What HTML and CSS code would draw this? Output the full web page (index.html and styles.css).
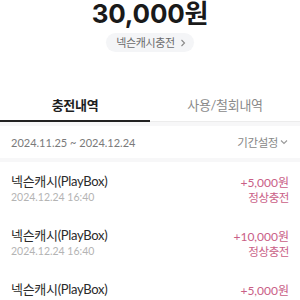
FILE: index.html
```html
<!DOCTYPE html>
<html lang="ko">
<head>
<meta charset="utf-8">
<link rel="stylesheet" href="styles.css">
</head>
<body>
<div class="page">
  <div class="balance">30,000원</div>
  <div class="charge-wrap">
    <span class="charge-btn">넥슨캐시충전
      <svg class="chev-r" width="6" height="8" viewBox="0 0 6 8"><path d="M1.5 1 L4.5 4 L1.5 7" fill="none" stroke="#888" stroke-width="1.1"/></svg>
    </span>
  </div>
  <div class="tabs">
    <div class="tab active">충전내역</div>
    <div class="tab">사용/철회내역</div>
  </div>
  <div class="gap"></div>
  <div class="period">
    <span class="range">2024.11.25 ~ 2024.12.24</span>
    <span class="setting">기간설정
      <svg class="chev-d" width="8" height="6" viewBox="0 0 8 6"><path d="M1 1.5 L4 4.5 L7 1.5" fill="none" stroke="#999" stroke-width="1.1"/></svg>
    </span>
  </div>
  <div class="gap"></div>
  <div class="list">
    <div class="item">
      <div class="left">
        <div class="title">넥슨캐시(PlayBox)</div>
        <div class="date">2024.12.24 16:40</div>
      </div>
      <div class="right">
        <div class="amount">+5,000원</div>
        <div class="status">정상충전</div>
      </div>
    </div>
    <div class="item">
      <div class="left">
        <div class="title">넥슨캐시(PlayBox)</div>
        <div class="date">2024.12.24 16:40</div>
      </div>
      <div class="right">
        <div class="amount">+10,000원</div>
        <div class="status">정상충전</div>
      </div>
    </div>
    <div class="item">
      <div class="left">
        <div class="title">넥슨캐시(PlayBox)</div>
        <div class="date">2024.12.24 16:40</div>
      </div>
      <div class="right">
        <div class="amount">+5,000원</div>
        <div class="status">정상충전</div>
      </div>
    </div>
  </div>
</div>
</body>
</html>
```
FILE: styles.css
```css
html, body {
  margin: 0;
  padding: 0;
  background: #fff;
}
body {
  font-family: Lato, "Noto Sans CJK KR", sans-serif;
  color: #222;
  height: 300px;
  overflow: hidden;
}
.page {
  width: 300px;
}
.balance {
  text-align: center;
  font-family: Inter, "Noto Sans CJK KR", sans-serif;
  font-weight: 700;
  font-size: 26px;
  line-height: 28px;
  color: #1a1a1a;
  letter-spacing: -0.2px;
}
.charge-wrap {
  display: flex;
  justify-content: center;
  margin-top: 5px;
}
.charge-btn {
  display: inline-flex;
  align-items: center;
  gap: 5px;
  height: 19px;
  padding: 0 8px 0 10px;
  border-radius: 10px;
  background: #f4f5f7;
  color: #6b6b6b;
  font-size: 11px;
  letter-spacing: -0.4px;
  line-height: 19px;
}
.tabs {
  display: flex;
  margin-top: 41px;
}
.tab {
  flex: 1;
  text-align: center;
  font-size: 13px;
  line-height: 18px;
  padding: 3px 0 7px;
  color: #8a8a8a;
  border-bottom: 1px solid #ececec;
  letter-spacing: -0.3px;
}
.tab.active {
  color: #1e1e1e;
  font-weight: 700;
  padding-bottom: 6px;
  border-bottom: 2px solid #222;
}
.gap {
  height: 4px;
  background: #f7f7f8;
}
.period {
  display: flex;
  justify-content: space-between;
  align-items: center;
  height: 32px;
  padding: 0 12px 0 11px;
  font-size: 11px;
}
.range {
  color: #7a7a7a;
}
.setting {
  display: inline-flex;
  align-items: center;
  gap: 2px;
  color: #888;
  font-size: 11.5px;
  letter-spacing: -0.4px;
}
.item {
  display: flex;
  justify-content: space-between;
  align-items: flex-start;
  height: 54px;
  padding: 0 11px;
}
.left {
  padding-top: 11px;
}
.title {
  font-size: 13px;
  line-height: 17px;
  color: #2a2a2a;
  letter-spacing: -0.3px;
}
.date {
  font-size: 10.5px;
  line-height: 14px;
  color: #b4b4b4;
}
.right {
  padding-top: 13px;
  text-align: right;
  color: #c95e86;
}
.amount {
  font-size: 12px;
  line-height: 16px;
}
.status {
  font-size: 11.5px;
  line-height: 14px;
  letter-spacing: -0.4px;
}
```
